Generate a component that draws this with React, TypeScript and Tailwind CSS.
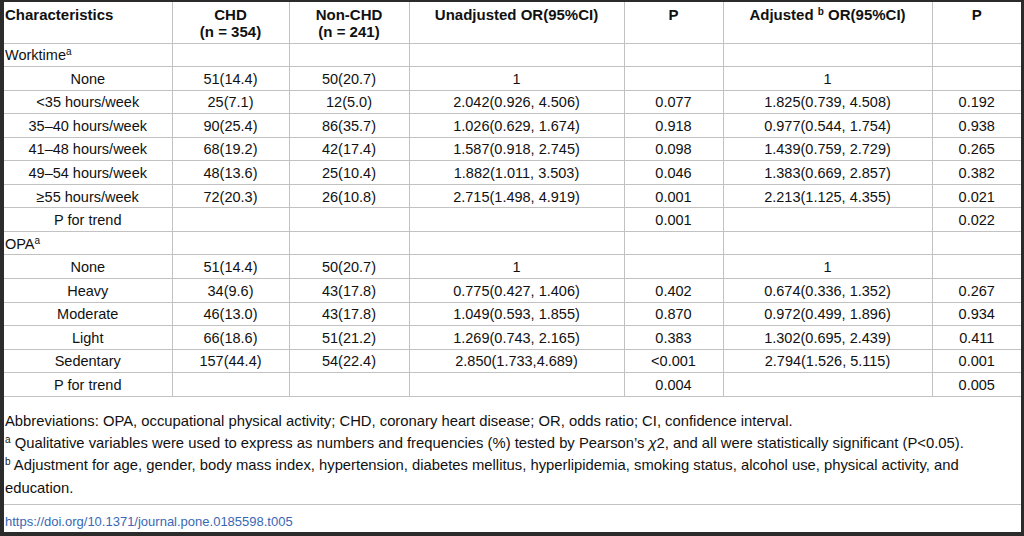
import React from "react";

type Row = { label: React.ReactNode; group?: boolean; c?: string[] };

const rows: Row[] = [
  { label: <>Worktime<sup className="text-[10px]">a</sup></>, group: true },
  { label: "None", c: ["51(14.4)", "50(20.7)", "1", "", "1", ""] },
  { label: "<35 hours/week", c: ["25(7.1)", "12(5.0)", "2.042(0.926, 4.506)", "0.077", "1.825(0.739, 4.508)", "0.192"] },
  { label: "35–40 hours/week", c: ["90(25.4)", "86(35.7)", "1.026(0.629, 1.674)", "0.918", "0.977(0.544, 1.754)", "0.938"] },
  { label: "41–48 hours/week", c: ["68(19.2)", "42(17.4)", "1.587(0.918, 2.745)", "0.098", "1.439(0.759, 2.729)", "0.265"] },
  { label: "49–54 hours/week", c: ["48(13.6)", "25(10.4)", "1.882(1.011, 3.503)", "0.046", "1.383(0.669, 2.857)", "0.382"] },
  { label: "≥55 hours/week", c: ["72(20.3)", "26(10.8)", "2.715(1.498, 4.919)", "0.001", "2.213(1.125, 4.355)", "0.021"] },
  { label: "P for trend", c: ["", "", "", "0.001", "", "0.022"] },
  { label: <>OPA<sup className="text-[10px]">a</sup></>, group: true },
  { label: "None", c: ["51(14.4)", "50(20.7)", "1", "", "1", ""] },
  { label: "Heavy", c: ["34(9.6)", "43(17.8)", "0.775(0.427, 1.406)", "0.402", "0.674(0.336, 1.352)", "0.267"] },
  { label: "Moderate", c: ["46(13.0)", "43(17.8)", "1.049(0.593, 1.855)", "0.870", "0.972(0.499, 1.896)", "0.934"] },
  { label: "Light", c: ["66(18.6)", "51(21.2)", "1.269(0.743, 2.165)", "0.383", "1.302(0.695, 2.439)", "0.411"] },
  { label: "Sedentary", c: ["157(44.4)", "54(22.4)", "2.850(1.733,4.689)", "<0.001", "2.794(1.526, 5.115)", "0.001"] },
  { label: "P for trend", c: ["", "", "", "0.004", "", "0.005"] },
];

const widths = [168, 117, 120, 215, 99, 209, 89];

export default function App() {
  return (
    <div
      className="w-[1024px] h-[536px] bg-[#2b2b2b] pt-[2px] pl-[4px] pr-[3px] pb-[4px] overflow-hidden"
      style={{ fontFamily: '"Liberation Sans", Arial, sans-serif' }}
    >
      <div className="bg-white w-full h-full flex flex-col text-[#111111]">
        <table className="border-collapse table-fixed w-[1017px]">
          <colgroup>
            {widths.map((w, i) => (
              <col key={i} style={{ width: w }} />
            ))}
          </colgroup>
          <thead>
            <tr className="h-[41px] border-b border-[#c2c2c2] text-[15px] font-bold leading-[17px] align-top">
              <th className="text-left pl-[1px] pt-[4px] border-r border-[#c2c2c2] font-bold">Characteristics</th>
              <th className="text-center pt-[4px] border-r border-[#c2c2c2] font-bold">
                CHD
                <br />
                (n = 354)
              </th>
              <th className="text-center pt-[4px] border-r border-[#c2c2c2] font-bold">
                Non-CHD
                <br />
                (n = 241)
              </th>
              <th className="text-center pt-[4px] border-r border-[#c2c2c2] font-bold">Unadjusted OR(95%CI)</th>
              <th className="text-center pt-[4px] border-r border-[#c2c2c2] font-bold">P</th>
              <th className="text-center pt-[4px] border-r border-[#c2c2c2] font-bold">
                Adjusted <sup className="text-[10px]">b</sup> OR(95%CI)
              </th>
              <th className="text-center pt-[4px] font-bold">P</th>
            </tr>
          </thead>
          <tbody className="text-[14.5px] leading-[17px]">
            {rows.map((r, i) => (
              <tr key={i} className="h-[23.55px] border-b border-[#c2c2c2]">
                <td
                  className={
                    r.group
                      ? "text-left pl-[1px] pt-[2px] border-r border-[#c2c2c2] whitespace-nowrap"
                      : "text-center pt-[2px] border-r border-[#c2c2c2] whitespace-nowrap"
                  }
                >
                  {r.label}
                </td>
                {[0, 1, 2, 3, 4, 5].map((j) => (
                  <td
                    key={j}
                    className={
                      j < 5
                        ? "text-center pt-[2px] border-r border-[#c2c2c2] whitespace-nowrap"
                        : "text-center pt-[2px] whitespace-nowrap"
                    }
                  >
                    {r.c ? r.c[j] : ""}
                  </td>
                ))}
              </tr>
            ))}
          </tbody>
        </table>
        <div className="pl-[1px] pt-[13px] text-[14.8px] leading-[22.3px] h-[107px]">
          <div>
            Abbreviations: OPA, occupational physical activity; CHD, coronary heart disease; OR, odds ratio; CI,
            confidence interval.
          </div>
          <div>
            <sup className="text-[10px] leading-none">a</sup> Qualitative variables were used to express as numbers and
            frequencies (%) tested by Pearson’s <i>χ</i>2, and all were statistically significant (P&lt;0.05).
          </div>
          <div>
            <sup className="text-[10px] leading-none">b</sup> Adjustment for age, gender, body mass index, hypertension,
            diabetes mellitus, hyperlipidemia, smoking status, alcohol use, physical activity, and education.
          </div>
        </div>
        <div className="border-t border-[#c2c2c2] pl-[1px] pt-[8px] text-[13px] leading-[18px] text-[#3868b5]">
          https://doi.org/10.1371/journal.pone.0185598.t005
        </div>
      </div>
    </div>
  );
}
